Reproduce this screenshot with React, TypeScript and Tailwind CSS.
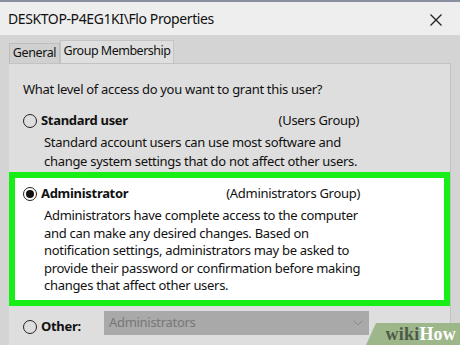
import React from "react";

function Radio({ checked }: { checked?: boolean }) {
  return (
    <span className="flex h-[14px] w-[14px] shrink-0 items-center justify-center rounded-full border-[1.5px] border-[#222] bg-transparent">
      {checked && <span className="h-[8px] w-[8px] rounded-full bg-[#111]" />}
    </span>
  );
}

export default function App() {
  return (
    <div
      className="relative flex h-[345px] w-[460px] flex-col overflow-hidden bg-[#d4d4d4] text-[#111]"
      style={{ fontFamily: '"Noto Sans", "Open Sans", sans-serif' }}
    >
      <div className="h-[2px] shrink-0 bg-[#8890a0]" />
      <div className="flex h-[33px] shrink-0 items-center justify-between bg-[#eeeeee] pl-[8px] pr-[18px]">
        <span className="text-[14px] tracking-[-0.4px] whitespace-nowrap">DESKTOP-P4EG1KI\Flo Properties</span>
        <svg width="12" height="12" viewBox="0 0 12 12" className="mt-[2px]">
          <path d="M0.5 0.5 L11.5 11.5 M11.5 0.5 L0.5 11.5" stroke="#222" strokeWidth="1.3" />
        </svg>
      </div>
      <div className="flex shrink-0 items-end bg-[#d4d4d4] pl-[9px] pt-[5px]">
        <div className="flex h-[20px] w-[51px] items-center justify-center border border-b-0 border-[#bdbdbd] bg-[#d0d0d0] text-[12.5px] tracking-[-0.4px] whitespace-nowrap">
          General
        </div>
        <div className="flex h-[23px] w-[114px] items-center justify-center border border-b-0 border-[#c4c4c4] bg-[#dfdfdf] pb-[2px] text-[12.5px] tracking-[-0.5px] whitespace-nowrap">
          Group Membership
        </div>
      </div>
      <div className="mr-[9px] ml-[9px] flex flex-1 flex-col border-t border-r border-[#c2c2c2] bg-[#dedede] text-[13px] tracking-[-0.3px]">
        <div className="pl-[14px] pt-[16px] leading-[18px]">
          What level of access do you want to grant this user?
        </div>
        <div className="mt-[14px] flex h-[18px] w-[350px] items-center pl-[14px]">
          <Radio />
          <span className="ml-[4px] flex-1 font-bold">Standard user</span>
          <span>(Users Group)</span>
        </div>
        <div className="mt-[3px] pl-[35px] leading-[19px]">
          <div>Standard account users can use most software and</div>
          <div>change system settings that do not affect other users.</div>
        </div>
        <div className="mt-[1px] h-[134px] border-[6px] border-[#16ee16] bg-white">
          <div className="mt-[7px] flex h-[18px] w-[345px] items-center pl-[8px]">
            <Radio checked />
            <span className="ml-[4px] flex-1 font-bold">Administrator</span>
            <span>(Administrators Group)</span>
          </div>
          <div className="mt-[4px] pl-[29px] leading-[17.5px]">
            <div>Administrators have complete access to the computer</div>
            <div>and can make any desired changes. Based on</div>
            <div>notification settings, administrators may be asked to</div>
            <div>provide their password or confirmation before making</div>
            <div>changes that affect other users.</div>
          </div>
        </div>
        <div className="mt-[5px] flex items-start pl-[14px]">
          <div className="flex w-[81px] items-center pt-[6px]">
            <Radio />
            <span className="ml-[4px] font-bold">Other:</span>
          </div>
          <div className="flex h-[24px] w-[265px] items-center justify-between bg-[#a9a9a9] pl-[5px] pr-[6px] text-[#777]">
            <span>Administrators</span>
            <svg width="10" height="6" viewBox="0 0 10 6">
              <path d="M0.5 0.5 L5 5 L9.5 0.5" fill="none" stroke="#8a8a8a" strokeWidth="1" />
            </svg>
          </div>
        </div>
      </div>
      <div
        className="absolute bottom-0 right-0 flex h-[22px] w-[94px] items-center justify-end bg-[#9db78b] pr-[4px]"
        style={{ clipPath: "polygon(10px 0, 100% 0, 100% 100%, 0 100%)" }}
      >
        <span
          className="text-[18px] font-bold leading-none tracking-[0.2px]"
          style={{ fontFamily: '"Liberation Serif", "DejaVu Serif", serif' }}
        >
          <span className="text-[#4d5a48]">wiki</span>
          <span className="text-white">How</span>
        </span>
      </div>
    </div>
  );
}
